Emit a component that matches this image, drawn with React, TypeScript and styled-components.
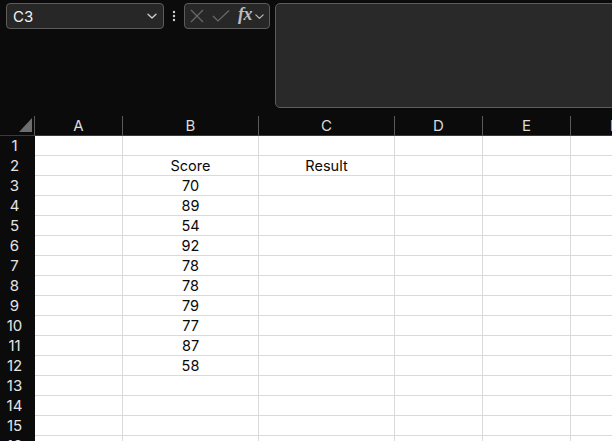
import React from "react";
import styled, { createGlobalStyle } from "styled-components";

const Global = createGlobalStyle`
  html, body { margin: 0; padding: 0; background: #0b0b0b; overflow: hidden; }
  body { font-family: Inter, "Noto Sans", sans-serif; }
`;

const Page = styled.div`
  width: 612px;
  height: 441px;
  overflow: hidden;
  background: #0b0b0b;
`;

const TopBar = styled.div`
  height: 116px;
  display: flex;
  align-items: flex-start;
  padding: 3px 0 0 6px;
  box-sizing: border-box;
`;

const Box = styled.div`
  box-sizing: border-box;
  height: 26px;
  border: 1px solid #5c5c5c;
  border-radius: 4px;
  background: #272727;
  display: flex;
  align-items: center;
`;

const NameBox = styled(Box)`
  width: 158px;
  padding: 0 5px 0 6px;
  justify-content: space-between;
  color: #f2f2f2;
  font-size: 15px;
`;

const Dots = styled.div`
  width: 20px;
  height: 26px;
  display: flex;
  align-items: center;
  justify-content: center;
`;

const FxBox = styled(Box)`
  width: 86px;
  padding: 0 0 0 5px;
`;

const FxText = styled.span`
  font-family: "Liberation Serif", "DejaVu Serif", serif;
  font-style: italic;
  font-weight: bold;
  font-size: 18px;
  color: #bdbdbd;
  margin-left: 8px;
  margin-top: -3px;
  letter-spacing: -0.5px;
`;

const FormulaArea = styled.div`
  flex: 1;
  height: 105px;
  margin-left: 5px;
  margin-right: -12px;
  border: 1px solid #5c5c5c;
  border-radius: 5px;
  background: #292929;
  box-sizing: border-box;
`;

const cols = [88, 136, 136, 88, 88, 88];
const letters = ["A", "B", "C", "D", "E", "F"];

const Grid = styled.div`
  display: grid;
  grid-template-columns: 35px ${cols.map((c) => c + "px").join(" ")};
  grid-auto-rows: 20px;
  width: max-content;
`;

const Corner = styled.div`
  background: #0b0b0b;
  border-right: 1px solid #5a5a5a;
  border-bottom: 1px solid #3a3a3a;
  box-sizing: border-box;
  position: relative;
`;

const ColHead = styled.div`
  background: #0b0b0b;
  border-right: 1px solid #5a5a5a;
  border-bottom: 1px solid #3a3a3a;
  box-sizing: border-box;
  color: #dcdcdc;
  font-size: 15px;
  line-height: 19px;
  text-align: center;
`;

const RowHead = styled.div`
  background: #0b0b0b;
  color: #e4e4e4;
  font-size: 15px;
  line-height: 20px;
  text-align: center;
  padding-right: 6px;
  box-sizing: border-box;
`;

const Cell = styled.div<{ $align?: string }>`
  background: #ffffff;
  border-right: 1px solid #dadada;
  border-bottom: 1px solid #dadada;
  box-sizing: border-box;
  color: #0a0a0a;
  font-size: 14.5px;
  line-height: 20px;
  text-align: ${(p) => p.$align || "left"};
  white-space: nowrap;
  overflow: hidden;
`;

const Chevron = ({ color = "#cfcfcf", size = 12 }: { color?: string; size?: number }) => (
  <svg width={size} height={size} viewBox="0 0 12 12" fill="none">
    <path d="M2 4.2 L6 8 L10 4.2" stroke={color} strokeWidth="1.3" strokeLinecap="round" strokeLinejoin="round" />
  </svg>
);

const data: Record<string, string> = {
  B2: "Score",
  C2: "Result",
  B3: "70",
  B4: "89",
  B5: "54",
  B6: "92",
  B7: "78",
  B8: "78",
  B9: "79",
  B10: "77",
  B11: "87",
  B12: "58",
};

export default function App() {
  const rows = Array.from({ length: 16 }, (_, i) => i + 1);
  return (
    <Page>
      <Global />
      <TopBar>
        <NameBox>
          <span>C3</span>
          <Chevron />
        </NameBox>
        <Dots>
          <svg width="4" height="12" viewBox="0 0 4 12">
            <circle cx="2" cy="2" r="1.2" fill="#d0d0d0" />
            <circle cx="2" cy="6" r="1.2" fill="#d0d0d0" />
            <circle cx="2" cy="10" r="1.2" fill="#d0d0d0" />
          </svg>
        </Dots>
        <FxBox>
          <svg width="14" height="14" viewBox="0 0 14 14" fill="none">
            <path d="M1 1 L13 13 M13 1 L1 13" stroke="#6a6a6a" strokeWidth="1.2" />
          </svg>
          <svg width="18" height="14" viewBox="0 0 18 14" fill="none" style={{ marginLeft: 8 }}>
            <path d="M1 7 L6 12 L17 1.5" stroke="#6a6a6a" strokeWidth="1.2" />
          </svg>
          <FxText>fx</FxText>
          <span style={{ marginLeft: 2, display: "flex" }}>
            <Chevron color="#bdbdbd" size={11} />
          </span>
        </FxBox>
        <FormulaArea />
      </TopBar>
      <Grid>
        <Corner>
          <svg width="13" height="14" viewBox="0 0 13 14" style={{ position: "absolute", left: 19, top: 2 }}>
            <path d="M13 0 L13 14 L0 14 Z" fill="#6e6e6e" />
          </svg>
        </Corner>
        {letters.map((l) => (
          <ColHead key={l}>{l}</ColHead>
        ))}
        {rows.map((r) => (
          <React.Fragment key={r}>
            <RowHead>{r}</RowHead>
            {letters.map((l) => (
              <Cell key={l} $align="center">
                {data[l + r] || ""}
              </Cell>
            ))}
          </React.Fragment>
        ))}
      </Grid>
    </Page>
  );
}
